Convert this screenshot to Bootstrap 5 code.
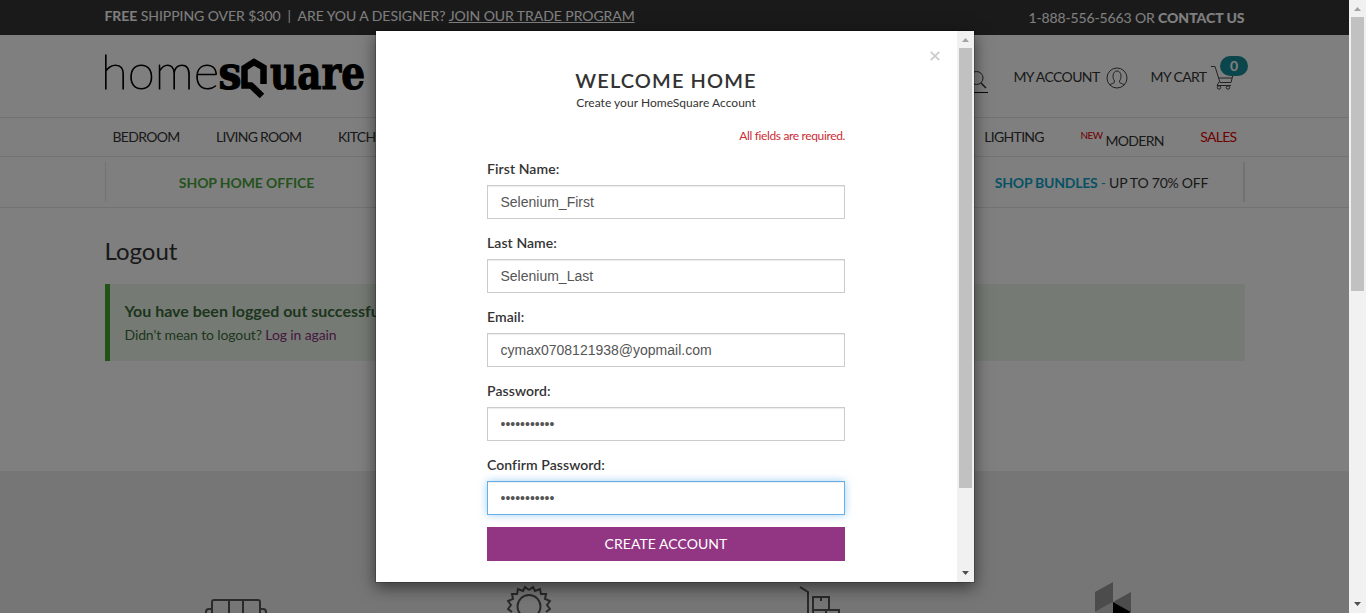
<!DOCTYPE html>
<html lang="en">
<head>
<meta charset="utf-8">
<title>HomeSquare - Create Account</title>
<link href="https://cdn.jsdelivr.net/npm/bootstrap@5.3.0/dist/css/bootstrap.min.css" rel="stylesheet">
<style>
body{font-family:Lato,sans-serif;font-size:14px;line-height:20px;color:#333;height:100vh}
a{color:inherit;text-decoration:none}
.wrap{width:1140px;margin:0 auto}
.topbar{height:35px;background:#353535;color:#fff;padding-bottom:3px}
.shipline{letter-spacing:-.06px}
.phone{top:2px;letter-spacing:-.14px}
.phone b{font-weight:900;letter-spacing:-.05px}
.brandrow{height:83px;border-bottom:1px solid #e4e4e4}
.acct{padding-top:32px;margin-right:10px;white-space:nowrap;letter-spacing:-.62px}
.mainnav{height:39px;border-bottom:1px solid #e4e4e4;letter-spacing:-.7px}
.mainnav .wrap{padding:0 8px}
.navset{gap:36.500px}
.promo{height:51px;border-bottom:1px solid #e4e4e4;padding:5px 0}
.promo .wrap{height:40px;border-left:1px solid #e4e4e4;border-right:2px solid #e4e4e4}
.promo .cell{width:282px;text-align:center;padding-top:2px;letter-spacing:-.1px}
.thin{color:#333}
.green{color:#4aa53a}.cyan{color:#0fa5cb}.red{color:#e00000}
.pagetitle{font-size:24px;font-weight:400;line-height:26px;margin:30px 0 20px}
.notice{height:77px;border-left:5px solid #41a62a;background:#ebf7e9;color:#3c6b3d;padding:17px 15px}
.notice strong{font-size:16px;line-height:20px}
.foot{position:relative;margin-top:110px;background:#ececec;flex:1}
.foot svg{position:absolute}
.searchend{width:20px;height:26px;border-bottom:1px solid #111}
.cartcount{position:absolute;left:1220px;top:56px;width:28px;height:20px;border-radius:10px;background:#178c98;color:#fff;font-weight:700;line-height:20px;text-align:center}
.shade{background:rgba(0,0,0,.5)}
.dialogbox{top:30px;left:375px;width:600px;height:553px;border:1px solid rgba(0,0,0,.2);box-shadow:0 5px 15px rgba(0,0,0,.5);background:#fff;background-clip:padding-box}
.dlgform{width:358px;margin-left:111px}
.dlgtitle{font-size:20px;font-weight:600;line-height:22px;letter-spacing:1.1px;margin:0;padding-top:38px}
.label14{font-weight:600;margin-bottom:6px;display:block;letter-spacing:.08px}
.form-control{height:34px;padding:6px 12px 6px 12.500px;font:14px/20px "Liberation Sans",sans-serif;color:#555;border:1px solid #ccc;border-radius:0;box-shadow:inset 0 1px 1px rgba(0,0,0,.075)}
.form-control.active{border-color:#66afe9;box-shadow:inset 0 1px 1px rgba(0,0,0,.075),0 0 8px rgba(102,175,233,.6)}
.btn-create{height:34px;border-radius:0;background:#923684;color:#fff;font-size:14px;line-height:20px;padding:6px;margin-top:-2px;letter-spacing:.05px}
.field{margin-bottom:14px}
.bar{width:17px;background:#f1f1f1;flex:none}
.bar .thumb{background:#c1c1c1;width:13px}
.xclose{right:17px;top:15px;line-height:0}
</style>
</head>
<body class="d-flex overflow-hidden">
<div class="flex-grow-1 position-relative d-flex flex-column overflow-hidden">
  <div class="topbar d-flex align-items-center"><div class="wrap d-flex justify-content-between">
    <div class="shipline"><b>FREE</b> SHIPPING OVER $300 &nbsp;|&nbsp; ARE YOU A DESIGNER? <u>JOIN OUR TRADE PROGRAM</u></div>
    <div class="phone position-relative">1-888-556-5663 OR <b>CONTACT US</b></div>
  </div></div>
  <div class="brandrow"><div class="wrap d-flex justify-content-between">
    <svg width="262" height="60" viewBox="0 -4 262 60" overflow="visible" style="margin-top:14px">
      <text x="-4" y="36" font-family="Lato" font-weight="200" font-size="48" stroke="#000" stroke-width="1" textLength="118" lengthAdjust="spacingAndGlyphs">home</text>
      <g font-family="DejaVu Serif" font-weight="700" font-size="47" stroke="#000" stroke-width="1.200">
      <text x="113.500" y="36" textLength="23" lengthAdjust="spacingAndGlyphs">s</text>
      <text x="165" y="36" textLength="95" lengthAdjust="spacingAndGlyphs">uare</text></g>
      <path d="M158.500 31V14.500L149 9 139.500 15V32.500H146L157 43" fill="none" stroke="#000" stroke-width="6.500"/>
    </svg>
    <div class="acct thin d-flex">
      <div class="searchend"><svg width="20" height="24" viewBox="0 0 20 24" fill="none" stroke="#333"><circle cx="8.500" cy="11" r="6.500"/><path d="M13 16l5 5" stroke-width="1.500"/></svg></div>
      <span style="margin-left:25px">MY ACCOUNT</span>
      <svg width="22" height="22" viewBox="0 0 22 22" fill="none" stroke="#444" style="margin-left:6px"><circle cx="11" cy="11" r="10"/><path d="M4 18C5 16 9 17 8.500 14 6 11 6.500 4 11 4s5 7 2.500 10C13 17 17 16 18 18"/></svg>
      <span style="margin-left:23px">MY CART</span>
      <svg width="24" height="26" viewBox="0 0 24 26" fill="none" stroke="#444" style="margin-left:4px;margin-top:-1px"><path d="M0 .5H4L9 16.500H20L23 5M8 12H21M8 16L6 19.500H20"/><circle cx="8" cy="21.500" r="1.700"/><circle cx="17" cy="21.500" r="1.700"/></svg>
    </div>
  </div></div>
  <div class="cartcount">0</div>
  <div class="mainnav"><div class="wrap d-flex thin justify-content-between align-items-center h-100">
    <div class="d-flex navset"><a>BEDROOM</a><a>LIVING ROOM</a><a>KITCHEN</a></div>
    <div class="d-flex navset"><a>LIGHTING</a><a class="newitem"><span class="red" style="font-size:10px;position:relative;top:-3px;letter-spacing:-.5px">NEW</span> <span class="position-relative" style="top:4px">MODERN</span></a><a class="red">SALES</a></div>
  </div></div>
  <div class="promo"><div class="wrap d-flex justify-content-between align-items-center">
    <div class="cell green fw-bold">SHOP HOME OFFICE</div>
    <div class="cell thin" style="letter-spacing:-.24px"><span class="cyan"><b>SHOP BUNDLES</b> -</span> UP TO 70% OFF</div>
  </div></div>
  <div class="wrap">
    <h1 class="pagetitle">Logout</h1>
    <div class="notice"><strong>You have been logged out successfully.</strong><div style="margin-top:3px;letter-spacing:-.12px">Didn't mean to logout? <a style="color:#8d2f7f">Log in again</a></div></div>
  </div>
  <div class="foot">
    <svg style="left:204px;top:127px" width="64" height="30" viewBox="0 0 64 30" fill="none" stroke="#555" stroke-width="2"><path d="M8 30V4q0-2 2-2H54q2 0 2 2V30M25 2V30M39 2V30M2 30V14q0-3 3-3h3M62 30V14q0-3-3-3h-3"/></svg>
    <svg style="left:507px;top:114px" width="44" height="44" viewBox="0 0 44 44" fill="none" stroke="#555" stroke-width="2"><path d="M22 5L26 2 28 6 33 4 34 9 39 9 38 14 43 16 40 20 43 24 39 27M22 5L18 2 16 6 11 4 10 9 5 9 6 14 1 16 4 20 1 24 5 27"/><circle cx="22" cy="21.500" r="11.500"/></svg>
    <svg style="left:799px;top:114px" width="42" height="40" viewBox="0 0 42 40" fill="none" stroke="#555" stroke-width="2"><path d="M1 2L9 7V40M14 26V12H30V26M14 25H40V40M14 24V40M27 25V40M22 12V16"/></svg>
    <svg style="left:1095px;top:110px" width="37" height="40" viewBox="0 0 37 40"><path d="M0 11L18 1V21L0 31Z" fill="#98999b"/><path d="M18 21L36 11V31Z" fill="#98999b"/><path d="M18 21L36 31 18 40Z"/><path d="M0 31L18 21V40Z" fill="#ccc"/></svg>
  </div>
  <div class="shade position-absolute top-0 start-0 w-100 h-100"></div>
  <div class="dialogbox position-absolute d-flex">
    <div class="flex-grow-1 position-relative">
      <a class="xclose position-absolute"><svg width="10" height="20" viewBox="0 0 10 20" stroke="#ccc" stroke-width="1.800"><path d="M.8 5.800l8.400 8.400M9.200 5.800L.8 14.200"/></svg></a>
      <div class="dlgform">
        <h2 class="dlgtitle text-center">WELCOME HOME</h2>
        <div class="text-center" style="font-size:12px;margin-top:2px;letter-spacing:.03px">Create your HomeSquare Account</div>
        <div class="text-end" style="font-size:12px;margin-top:13px;color:#cb2b35;letter-spacing:-.36px">All fields are required.</div>
        <form style="margin-top:13px">
          <div class="field"><label class="label14">First Name:</label><input class="form-control" value="Selenium_First"></div>
          <div class="field"><label class="label14">Last Name:</label><input class="form-control" value="Selenium_Last"></div>
          <div class="field"><label class="label14">Email:</label><input class="form-control" value="cymax0708121938@yopmail.com"></div>
          <div class="field"><label class="label14">Password:</label><input type="password" class="form-control" value="Selenium123"></div>
          <div class="field"><label class="label14">Confirm Password:</label><input type="password" class="form-control active" value="Selenium123"></div>
          <button type="button" class="btn btn-create w-100">CREATE ACCOUNT</button>
        </form>
      </div>
    </div>
    <div class="bar d-flex flex-column align-items-center">
      <svg width="17" height="17" fill="#a3a3a3"><path d="M5 11H12L8.500 7Z"/></svg>
      <div class="thumb" style="height:440px"></div>
      <svg class="mt-auto" width="17" height="17" fill="#505050"><path d="M5 6H12L8.500 10Z"/></svg>
    </div>
  </div>
</div>
<div class="bar d-flex flex-column align-items-center">
  <svg width="17" height="17" fill="#a3a3a3"><path d="M5 11H12L8.500 7Z"/></svg>
  <div class="thumb" style="height:274px"></div>
  <svg class="mt-auto" width="17" height="17" fill="#505050"><path d="M5 6H12L8.500 10Z"/></svg>
</div>
<script src="https://cdn.jsdelivr.net/npm/bootstrap@5.3.0/dist/js/bootstrap.bundle.min.js"></script>
</body>
</html>
